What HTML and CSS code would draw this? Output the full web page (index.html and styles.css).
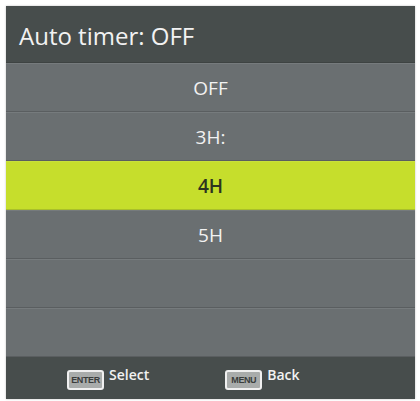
FILE: index.html
```html
<!DOCTYPE html>
<html lang="en">
<head>
    <meta charset="UTF-8">
    <title>Auto timer</title>
    <link rel="stylesheet" href="styles.css">
</head>
<body>
    <div class="menu">
        <div class="menu-title">Auto timer: OFF</div>
        <ul class="options">
            <li class="option">OFF</li>
            <li class="option">3H:</li>
            <li class="option active">4H</li>
            <li class="option">5H</li>
            <li class="option"></li>
            <li class="option"></li>
        </ul>
        <div class="menu-footer">
            <div class="hint"><span class="key">ENTER</span><span class="hint-label">Select</span></div>
            <div class="hint"><span class="key">MENU</span><span class="hint-label">Back</span></div>
        </div>
    </div>
</body>
</html>
```

FILE: styles.css
```css
:root {
    --header-bg: #474d4c;
    --row-bg: #6a6f71;
    --active-bg: #c6de2c;
    --text-color: #f2f2f2;
}

* {
    margin: 0;
    padding: 0;
    box-sizing: border-box;
}

body {
    background: #ffffff;
    padding: 6px;
    font-family: "Open Sans", "Noto Sans", sans-serif;
    color: var(--text-color);
}

.menu {
    width: 409px;
    height: 393px;
    display: flex;
    flex-direction: column;
    background: var(--row-bg);
    box-shadow: 0 0 2px rgba(0, 0, 0, 0.25);
}

.menu-title {
    height: 57px;
    flex-shrink: 0;
    display: flex;
    align-items: center;
    padding-left: 13px;
    padding-top: 2px;
    background: var(--header-bg);
    font-size: 24px;
    font-weight: 500;
    border-bottom: 1px solid #3e4342;
}

.options {
    list-style: none;
    flex-grow: 1;
    display: flex;
    flex-direction: column;
}

.option {
    flex: 1;
    display: flex;
    align-items: center;
    justify-content: center;
    font-size: 19px;
    font-weight: 500;
    background: var(--row-bg);
    border-top: 1px solid #767b7d;
    border-bottom: 1px solid #5a5e60;
}

.option.active {
    background: var(--active-bg);
    color: #2f3320;
    font-weight: 600;
    border-top-color: #c9e13a;
    border-bottom-color: #a9bf2a;
}

.menu-footer {
    height: 42px;
    flex-shrink: 0;
    display: flex;
    align-items: center;
    padding-left: 61px;
    gap: 76px;
    background: var(--header-bg);
}

.hint {
    display: flex;
    align-items: flex-start;
    gap: 5px;
}

.key {
    display: inline-flex;
    align-items: center;
    justify-content: center;
    width: 37px;
    height: 20px;
    margin-top: 3px;
    border: 2px solid #f0f0f0;
    border-radius: 3px;
    background: #a9acab;
    font-family: "Liberation Sans", sans-serif;
    font-size: 9px;
    font-weight: bold;
    letter-spacing: -0.4px;
    color: #3a3d3c;
}

.hint-label {
    font-size: 14px;
    font-weight: 600;
    line-height: 16px;
}
```
